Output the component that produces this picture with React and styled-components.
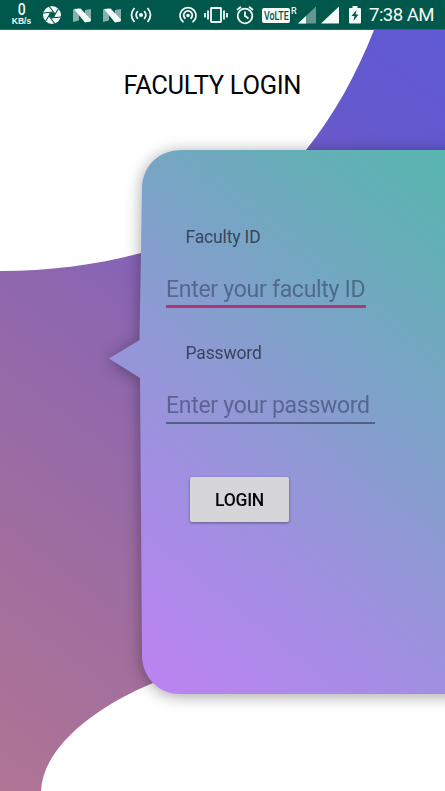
import React from "react";
import styled, { createGlobalStyle } from "styled-components";

const GlobalStyle = createGlobalStyle`
  *, *::before, *::after { box-sizing: border-box; }
  body { margin: 0; font-family: Roboto, "Liberation Sans", sans-serif; background: #fff; }
`;

const Screen = styled.main`
  position: relative;
  display: flex;
  flex-direction: column;
  width: 445px;
  height: 791px;
  overflow: hidden;
  background: linear-gradient(37deg, #b07494 0%, #a16e9e 22%, #8c66b0 50%, #8061bd 62%, #6659cd 82%, #5e5ad5 100%);
`;

const Backdrop = styled.svg`
  position: absolute;
  inset: 0;
  width: 445px;
  height: 791px;
`;

const StatusBar = styled.header`
  position: relative;
  display: flex;
  align-items: center;
  height: 30px;
  padding-left: 11px;
  background: #00574b;
  border-bottom: 1px solid #2b7067;
  color: #f4faf8;
`;

const Icon = styled.svg`
  flex: none;
  display: block;
  width: ${(p) => p.$w}px;
  height: 20px;
  margin-left: ${(p) => p.$gap || 0}px;
  overflow: visible;
  fill: ${(p) => (p.$line ? "none" : "currentColor")};
  stroke: ${(p) => (p.$line ? "currentColor" : "none")};
  stroke-width: 1.8;
`;

const NetSpeed = styled.div`
  display: flex;
  flex-direction: column;
  align-items: center;
  width: 21px;
  font: 700 8.500px/9px "Liberation Sans", sans-serif;
`;

const SpeedValue = styled.span`
  height: 14px;
  font: 500 16.500px/14px Roboto, sans-serif;
  transform: scaleX(0.85);
`;

const Volte = styled.div`
  display: flex;
  align-items: center;
  justify-content: center;
  width: 28px;
  height: 15px;
  margin: 2px 0 0 8px;
  border-radius: 2px;
  background: #f4faf8;
  color: #00574b;
`;

const VolteText = styled.span`
  font: 500 12.500px/15px Roboto, sans-serif;
  transform: scaleX(0.71);
`;

const Roaming = styled.span`
  width: 6px;
  height: 20px;
  margin-left: 1px;
  font: 500 9px/12px Roboto, sans-serif;
`;

const Clock = styled.time`
  margin: 1px 0 0 8px;
  font-size: 18.6px;
  line-height: 22px;
  letter-spacing: -0.55px;
  white-space: nowrap;
`;

const Title = styled.h1`
  position: relative;
  height: 120px;
  margin: 0;
  padding: 40px 0 0 123.5px;
  font-size: 25.5px;
  line-height: 31px;
  letter-spacing: -0.33px;
  font-weight: 400;
  color: #060606;
  white-space: nowrap;
`;

const CardShadow = styled.div`
  margin-left: 109px;
  filter: drop-shadow(0 2px 8px rgba(0, 0, 0, 0.36));
`;

const Card = styled.form`
  display: flex;
  flex-direction: column;
  align-items: flex-start;
  width: 366px;
  height: 544px;
  padding: 75.5px 0 0 57px;
  background: linear-gradient(39deg, #bc83f1 5%, #a68ce5 27%, #8f99d4 48%, #7ba3c7 64%, #68adb9 80%, #59b5b0 96%);
  clip-path: path("M33 39C33 17 49 0 73 0H366V544H70C49 544 33 526 33 506L31 228L0 208.500L30.500 190Z");
`;

const Label = styled.label`
  margin-left: 19.5px;
  font-size: 17.5px;
  line-height: 22px;
  letter-spacing: -0.15px;
  color: rgba(28, 34, 53, 0.74);
`;

const Field = styled.input`
  width: ${(p) => p.$width}px;
  height: 41px;
  margin: 19px 0 ${(p) => p.$after}px;
  padding: 7px 0 0;
  border: 0;
  border-bottom: ${(p) => (p.$active ? "3px solid #b73474" : "2px solid #53618a")};
  border-radius: 0;
  outline: 0;
  background: transparent;
  font: 400 23px/30px Roboto, sans-serif;
  letter-spacing: -0.28px;
  color: #28304b;
  &::placeholder { color: rgba(42, 54, 87, 0.53); opacity: 1; }
`;

const LoginButton = styled.button`
  width: 99px;
  height: 45px;
  margin-left: 24px;
  padding: 1px 0 0;
  border: 0;
  border-radius: 2px;
  background: #d6d6d8;
  box-shadow: 0 1px 3px rgba(0, 0, 0, 0.4);
  font: 500 17.500px/20px Roboto, sans-serif;
  letter-spacing: -0.25px;
  color: #060606;
`;

function NougatIcon({ gap }) {
  return (
    <Icon $w={18} $gap={gap} viewBox="0 0 18 20">
      <path opacity=".55" d="M0 4.500 6 3.500V15.500L0 17ZM12 5 18 4V16L12 17Z" />
      <path d="M1 4 7.500 3.500 18 14.500 17.500 16.500 12 17.500Z" />
    </Icon>
  );
}

function Status() {
  return (
    <StatusBar>
      <NetSpeed><SpeedValue>0</SpeedValue>KB/s</NetSpeed>
      <Icon $w={18} $gap={11} viewBox="0 0 18 20">
        <circle cx="9" cy="10" r="9" />
        <g fill="none" stroke="#00574b" strokeWidth="1.100">
          <path d="M6 1 12 9M15.500 3.500 10.500 12M18 12 8 13M12 19 6 11M2.500 16.500 7.500 8M0 8 10 7" />
        </g>
        <path fill="#00574b" d="M9 7 11.800 8.500 11.500 11.500 9 13 6.300 11.500V8.500Z" />
      </Icon>
      <NougatIcon gap={12} />
      <NougatIcon gap={12} />
      <Icon $w={22} $gap={9} $line viewBox="0 0 22 20">
        <circle cx="11" cy="10" r="2" fill="currentColor" stroke="none" />
        <path d="M7.800 6Q4.500 10 7.800 14M14.200 6Q17.500 10 14.200 14M4.500 3Q-1.500 10 4.500 17M17.500 3Q23.500 10 17.500 17" />
      </Icon>
      <Icon $w={18} $gap={27} $line viewBox="0 0 18 20">
        <path d="M4.500 17.200A8 8 0 1 1 13.500 17.200M6.500 13.700A4.300 4.300 0 1 1 11.500 13.700" />
        <circle cx="9" cy="10.500" r="1.800" fill="currentColor" stroke="none" />
      </Icon>
      <Icon $w={24} $gap={7} $line viewBox="0 0 24 20">
        <rect x="7" y="3" width="10" height="14" rx=".5" />
        <path d="M4 5.500V14.500M1 8V12.500M20 5.500V14.500M23 8V12.500" />
      </Icon>
      <Icon $w={18} $gap={8} $line viewBox="0 0 18 20">
        <circle cx="9" cy="11" r="7.300" />
        <path d="M9 6.500V11L12.500 13.500M1 5 5 1.700M13 1.700 17 5" />
      </Icon>
      <Volte><VolteText>VoLTE</VolteText></Volte>
      <Roaming>R</Roaming>
      <Icon $w={18} $gap={1} viewBox="0 0 18 20">
        <path opacity=".4" d="M0 18.500 18 1.500V18.500Z" />
        <path d="M0 18.500 8 11V18.500Z" />
      </Icon>
      <Icon $w={18} $gap={5} viewBox="0 0 18 20">
        <path d="M0 18.500 18 1.500V18.500Z" />
      </Icon>
      <Icon $w={12} $gap={10} viewBox="0 0 12 20">
        <path d="M1 3H3.500V1H8.500V3H11Q12 3 12 4V17.500Q12 18.500 11 18.500H1Q0 18.500 0 17.500V4Q0 3 1 3Z" />
        <path fill="#00574b" d="M7.500 5 2.500 11H5.500L4.500 16 9.500 9.500H6.500Z" />
      </Icon>
      <Clock>7:38 AM</Clock>
    </StatusBar>
  );
}

export default function App() {
  return (
    <>
      <GlobalStyle />
      <Screen>
        <Backdrop viewBox="0 0 445 791" fill="#fff" aria-hidden="true">
          <path d="M0 0H384L374 30C357 73 335 114 306 150C262 202 210 236 141 253C96 265 50 271 0 271Z" />
          <path d="M41 791C43 747 95 707 153 683L200 670H445V791Z" />
        </Backdrop>
        <Status />
        <Title>FACULTY LOGIN</Title>
        <CardShadow>
          <Card onSubmit={(e) => e.preventDefault()}>
            <Label htmlFor="faculty">Faculty ID</Label>
            <Field id="faculty" $width={200} $after={34} $active placeholder="Enter your faculty ID" />
            <Label htmlFor="password">Password</Label>
            <Field id="password" type="password" $width={209} $after={53.5} placeholder="Enter your password" />
            <LoginButton type="submit">LOGIN</LoginButton>
          </Card>
        </CardShadow>
      </Screen>
    </>
  );
}
